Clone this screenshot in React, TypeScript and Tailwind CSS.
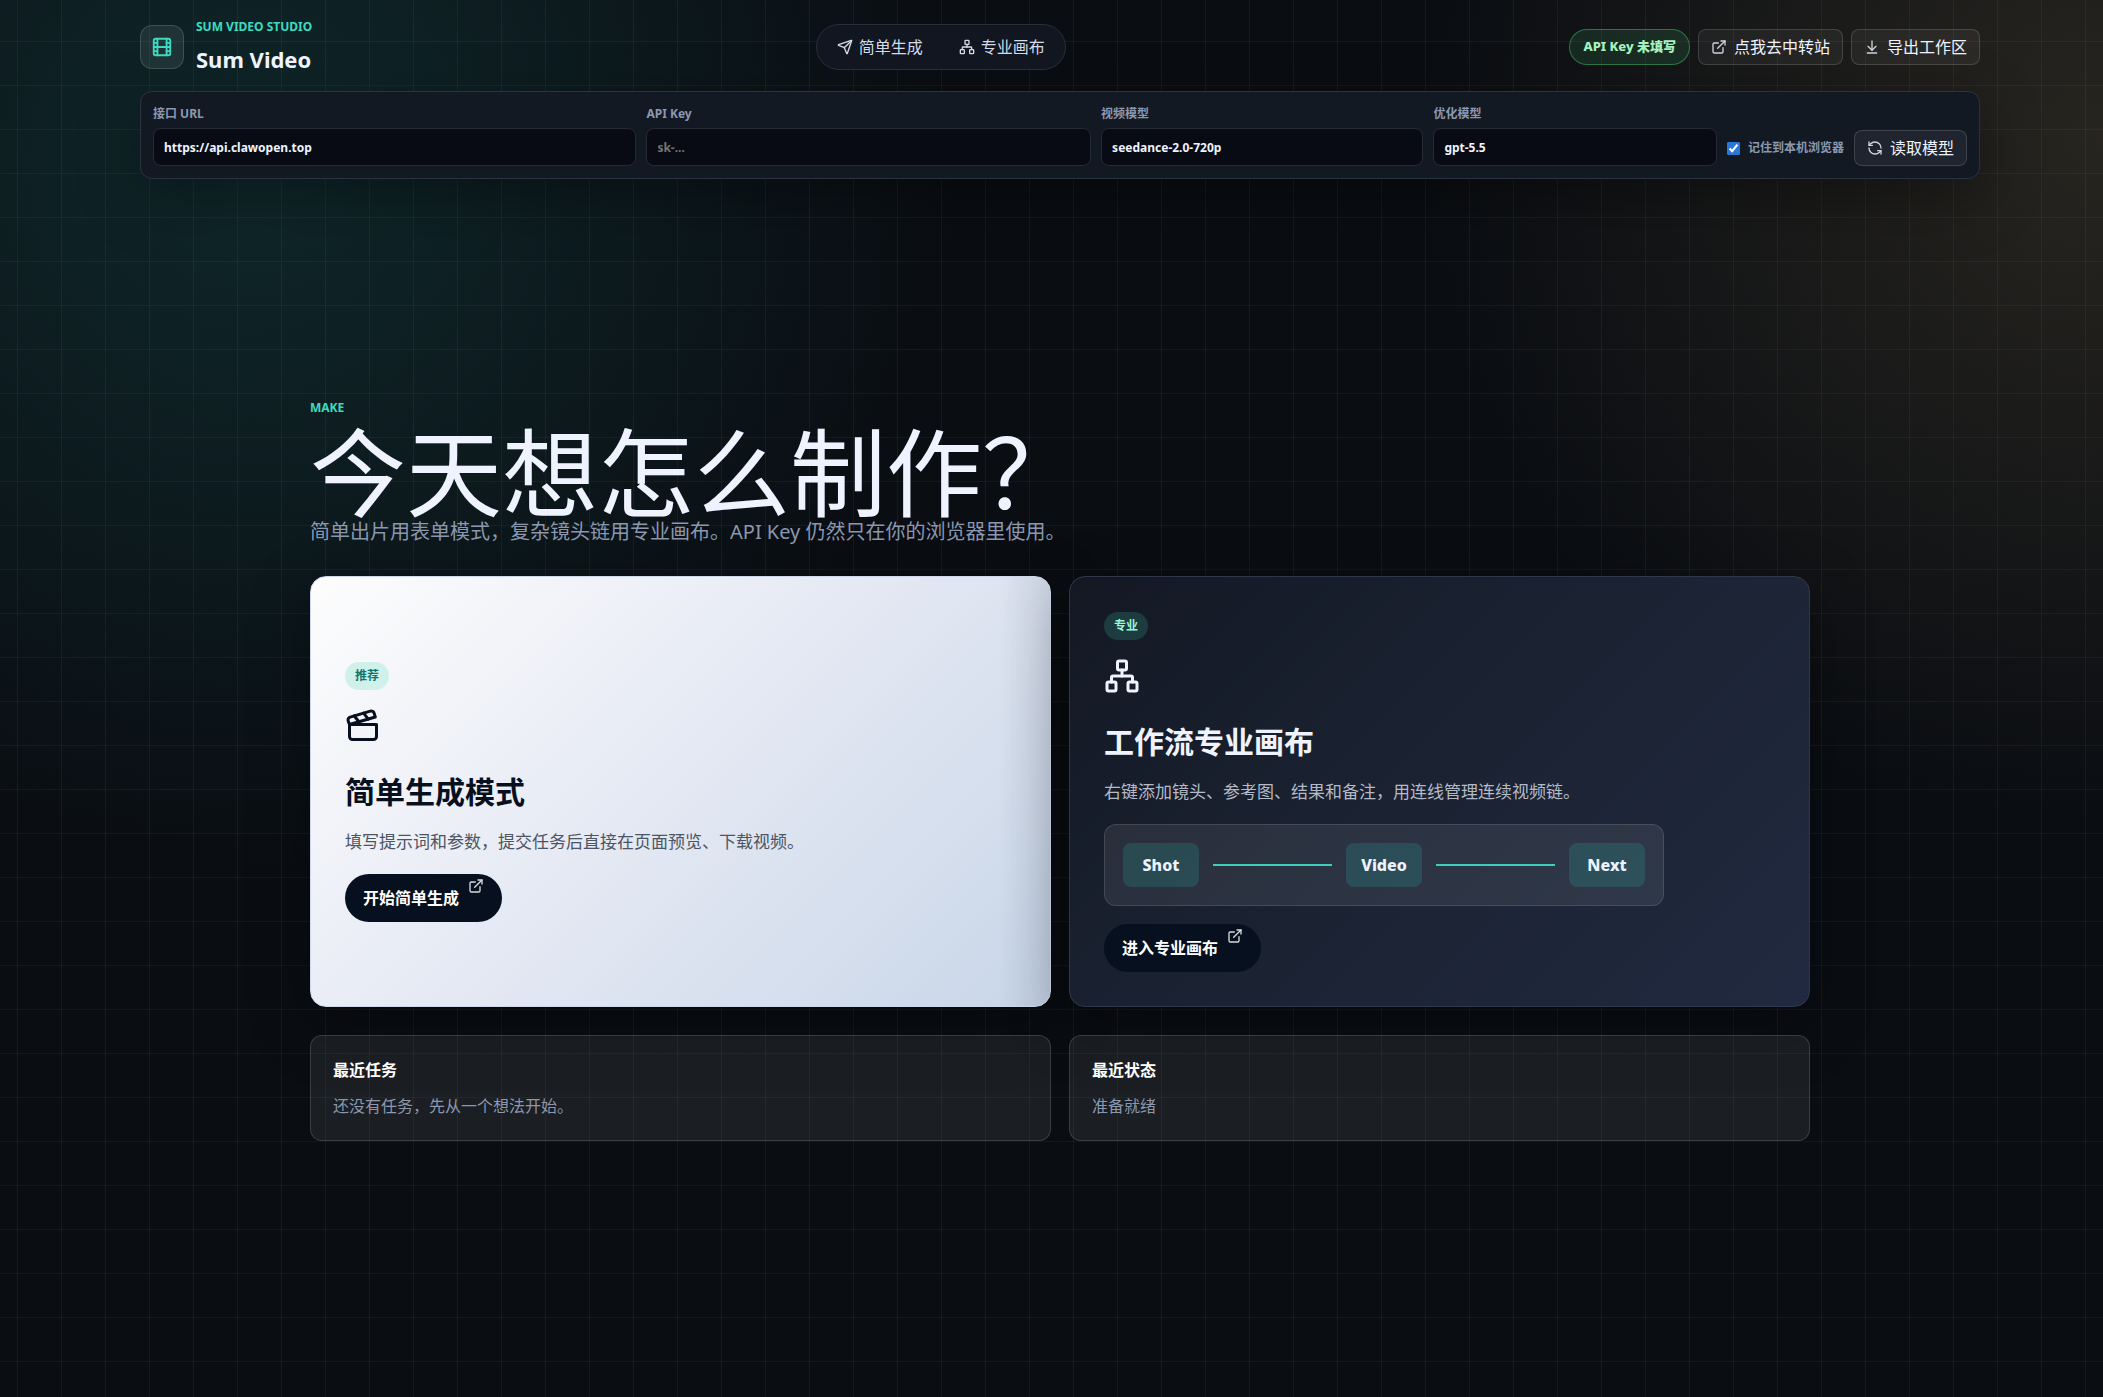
import React, { useState } from 'react';
import {
  ArrowDownToLine,
  Clapperboard,
  ExternalLink,
  Film,
  Network,
  RefreshCcw,
  Send,
} from 'lucide-react';

interface FieldProps {
  id: string;
  label: string;
  value: string;
  onChange: (value: string) => void;
  placeholder?: string;
  type?: string;
}

function Field({ id, label, value, onChange, placeholder, type = 'text' }: FieldProps) {
  return (
    <div className="flex min-w-0 flex-col gap-1">
      <label htmlFor={id} className="text-xs leading-5 font-bold text-[#8b98b0]">
        {label}
      </label>
      <input
        id={id}
        type={type}
        value={value}
        placeholder={placeholder}
        onChange={(e) => onChange(e.target.value)}
        className="h-[38px] w-full rounded-lg border border-[#262a36] bg-[#080b13] px-2.5 text-xs font-bold text-[#eef3ff] placeholder:text-[#757575]"
      />
    </div>
  );
}

function FlowPreview() {
  return (
    <div className="flex w-full max-w-[560px] items-center gap-3.5 rounded-xl border border-white/12 bg-white/8 px-[18px] py-[18px]">
      <span className="grid h-11 w-[76px] place-items-center rounded-lg bg-[#2dd4bf]/16 text-base font-extrabold text-[#eef3ff]">Shot</span>
      <span className="h-0.5 flex-1 bg-[#3ecfbb]" />
      <span className="grid h-11 w-[76px] place-items-center rounded-lg bg-[#2dd4bf]/16 text-base font-extrabold text-[#eef3ff]">Video</span>
      <span className="h-0.5 flex-1 bg-[#3ecfbb]" />
      <span className="grid h-11 w-[76px] place-items-center rounded-lg bg-[#2dd4bf]/16 text-base font-extrabold text-[#eef3ff]">Next</span>
    </div>
  );
}

function StartButton({ children }: { children: React.ReactNode }) {
  return (
    <button type="button" className="flex h-12 items-start gap-[9px] rounded-full bg-[#06101f] px-[18px] text-base font-bold text-white">
      <span className="self-center">{children}</span>
      <ExternalLink className="mt-1 h-4 w-4 opacity-85" />
    </button>
  );
}

export default function App() {
  const [baseUrl, setBaseUrl] = useState('https://api.clawopen.top');
  const [apiKey, setApiKey] = useState('');
  const [videoModel, setVideoModel] = useState('seedance-2.0-720p');
  const [textModel, setTextModel] = useState('gpt-5.5');
  const [remember, setRemember] = useState(true);

  return (
    <div className="min-h-screen bg-[#0a0d12] bg-[linear-gradient(90deg,rgba(45,212,191,0.08)_1px,transparent_1px),linear-gradient(rgba(148,163,184,0.07)_1px,transparent_1px),radial-gradient(circle_at_12%_12%,rgba(45,200,190,0.14),transparent_32%),radial-gradient(circle_at_100%_10%,rgba(250,210,130,0.12),transparent_28%)] bg-size-[44px_44px,44px_44px,100%_100%,100%_100%] bg-position-[17px_0,0_-3px,0_0,0_0] pl-[17px] font-['Noto_Sans','Noto_Sans_CJK_SC',sans-serif] text-[#eef3ff]">
      <div className="mx-auto w-full max-w-[1840px]">
        {/* 顶部导航 */}
        <header className="flex items-center justify-between pt-[19px]">
          <div className="flex items-center gap-3">
            <div className="grid h-11 w-11 place-items-center rounded-xl border border-white/14 bg-white/8 text-[#3ddbc0]">
              <Film className="h-[22px] w-[22px]" />
            </div>
            <div>
              <p className="text-xs leading-4 font-bold text-[#3ddbc0]">SUM VIDEO STUDIO</p>
              <h1 className="mt-2 text-[22px] leading-8 font-bold">Sum Video</h1>
            </div>
          </div>

          <nav className="flex h-[46px] items-center gap-9 rounded-full border border-[#2a2e3b] bg-[#121620] px-5 text-[#d3dbea]">
            <button type="button" className="flex items-center gap-1.5 text-base">
              <Send className="h-4 w-4" />
              简单生成
            </button>
            <button type="button" className="flex items-center gap-1.5 text-base">
              <Network className="h-4 w-4" />
              专业画布
            </button>
          </nav>

          <div className="flex items-center justify-end gap-2">
            <span className="flex h-9 items-center rounded-full border border-[#4ade80]/40 bg-[#4ade80]/12 px-[13px] text-[13px] font-extrabold text-[#a7f3c0]">
              API Key 未填写
            </span>
            <a href="#relay" className="flex h-9 items-center gap-[7px] rounded-lg border border-white/14 bg-white/5 px-3 text-base">
              <ExternalLink className="h-4 w-4 opacity-85" />
              点我去中转站
            </a>
            <button type="button" className="flex h-9 items-center gap-[7px] rounded-lg border border-white/14 bg-white/5 px-3 text-base">
              <ArrowDownToLine className="h-4 w-4 opacity-85" />
              导出工作区
            </button>
          </div>
        </header>

        {/* 接口设置 */}
        <section className="mt-4 grid grid-cols-[1.5fr_1.38fr_1fr_0.88fr_auto_auto] items-end gap-2.5 rounded-xl border border-[#2b3341] bg-[#131923] p-3 shadow-[0_18px_60px_rgba(0,0,0,0.35)]">
          <Field id="base-url" label="接口 URL" value={baseUrl} onChange={setBaseUrl} />
          <Field id="api-key" label="API Key" type="password" value={apiKey} onChange={setApiKey} placeholder="sk-..." />
          <Field id="video-model" label="视频模型" value={videoModel} onChange={setVideoModel} />
          <Field id="text-model" label="优化模型" value={textModel} onChange={setTextModel} />
          <label className="flex h-9 items-center gap-2 text-xs font-bold text-[#8b98b0]">
            <input
              type="checkbox"
              checked={remember}
              onChange={(e) => setRemember(e.target.checked)}
              className="h-[13px] w-[13px] accent-[#2878d8]"
            />
            记住到本机浏览器
          </label>
          <button type="button" className="flex h-9 items-center gap-[7px] rounded-lg border border-white/14 bg-white/5 px-3 text-base">
            <RefreshCcw className="h-4 w-4 opacity-85" />
            读取模型
          </button>
        </section>
      </div>

      <main className="mx-auto mt-[219px] w-full max-w-[1500px] pb-16">
        <p className="text-xs leading-5 font-bold text-[#3ddbc0]">MAKE</p>
        <h2 className="mt-2 text-[96px] leading-[92px]">今天想怎么制作？</h2>
        <p className="text-xl leading-7 text-[#8b98b0]">简单出片用表单模式，复杂镜头链用专业画布。API Key 仍然只在你的浏览器里使用。</p>

        <div className="mt-[30px] grid grid-cols-2 gap-[18px]">
          <article className="flex min-h-[431px] flex-col items-start justify-center rounded-2xl border border-[#cfd8ea] bg-[linear-gradient(90deg,transparent_93%,rgba(15,23,42,0.08)),linear-gradient(135deg,#fdfdfd,#e6eaf4_45%,#c8d6e8)] px-[34px] text-[#06101f] shadow-[0_18px_60px_rgba(0,0,0,0.35)]">
            <span className="flex h-7 items-center rounded-full bg-[#d0f1ea] px-2.5 text-xs font-bold text-[#0f766e]">推荐</span>
            <Clapperboard className="mt-[18px] h-9 w-9" />
            <h3 className="mt-6 text-3xl leading-12 font-bold">简单生成模式</h3>
            <p className="mt-3 text-[17px] leading-7 text-[#4b5563]">填写提示词和参数，提交任务后直接在页面预览、下载视频。</p>
            <div className="mt-[18px]">
              <StartButton>开始简单生成</StartButton>
            </div>
          </article>

          <article className="flex min-h-[431px] flex-col items-start justify-center rounded-2xl border border-[#2f384b] bg-[linear-gradient(135deg,#131823,#1b2333_50%,#20293f)] px-[34px] shadow-[0_18px_60px_rgba(0,0,0,0.35)]">
            <span className="flex h-7 items-center rounded-full bg-[#1c3c40] px-2.5 text-xs font-bold text-[#99f6d8]">专业</span>
            <Network className="mt-[18px] h-9 w-9" />
            <h3 className="mt-6 text-3xl leading-12 font-bold">工作流专业画布</h3>
            <p className="mt-3 mb-[18px] text-[17px] leading-7 text-[#b3bac8]">右键添加镜头、参考图、结果和备注，用连线管理连续视频链。</p>
            <FlowPreview />
            <div className="mt-[18px]">
              <StartButton>进入专业画布</StartButton>
            </div>
          </article>
        </div>

        {/* 最近动态 */}
        <div className="mt-7 grid grid-cols-2 gap-[18px]">
          <section className="rounded-xl border border-white/14 bg-white/7 px-[22px] py-5">
            <h4 className="text-base leading-7 font-bold text-white">最近任务</h4>
            <p className="mt-2 text-base leading-7 text-[#8b98b0]">还没有任务，先从一个想法开始。</p>
          </section>
          <section className="rounded-xl border border-white/14 bg-white/7 px-[22px] py-5">
            <h4 className="text-base leading-7 font-bold text-white">最近状态</h4>
            <p className="mt-2 text-base leading-7 text-[#8b98b0]">准备就绪</p>
          </section>
        </div>
      </main>
    </div>
  );
}
